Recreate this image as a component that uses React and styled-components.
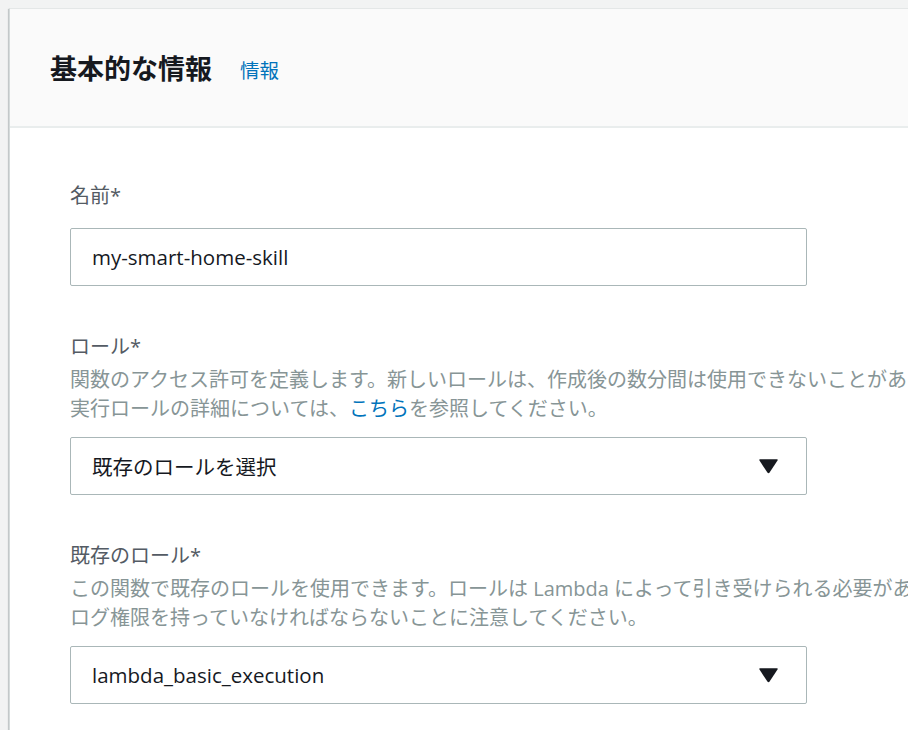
import React from "react";
import styled, { createGlobalStyle } from "styled-components";

const Global = createGlobalStyle`
  html, body {
    margin: 0;
    padding: 0;
    background: #f2f3f3;
    overflow: hidden;
  }
  body {
    font-family: "Open Sans", "Noto Sans CJK JP", sans-serif;
    -webkit-font-smoothing: antialiased;
  }
`;

const Page = styled.div`
  padding: 8px 0 0 9px;
  width: 1200px;
`;

const Card = styled.section`
  background: #ffffff;
  border-top: 1px solid #e4e7e7;
  border-left: 1px solid #d5dbdb;
  box-shadow: 0 1px 1px 0 rgba(0, 28, 36, 0.3), -1px 1px 1px 0 rgba(0, 28, 36, 0.15);
  min-height: 760px;
`;

const Header = styled.header`
  display: flex;
  align-items: center;
  gap: 28px;
  height: 117px;
  padding-left: 40px;
  background: #fafafa;
  border-bottom: 2px solid #e9eded;
`;

const Title = styled.h2`
  margin: 0;
  font-family: "Noto Sans CJK JP", sans-serif;
  font-size: 27px;
  font-weight: 700;
  color: #16191f;
  line-height: 1;
`;

const InfoLink = styled.a`
  font-family: "Noto Sans CJK JP", sans-serif;
  font-size: 19.5px;
  color: #0073bb;
  text-decoration: none;
  line-height: 1;
  margin-top: 4px;
`;

const Body = styled.div`
  padding: 54px 0 0 60px;
  display: flex;
  flex-direction: column;
  gap: 47px;
`;

const Field = styled.div`
  display: flex;
  flex-direction: column;
`;

const Label = styled.label`
  font-family: "Open Sans", "Noto Sans CJK JP", sans-serif;
  font-size: 20px;
  line-height: 28px;
  color: #545b64;
  margin-bottom: ${(p) => (p.$hasDesc ? "4px" : "18px")};
`;

const Desc = styled.p`
  margin: 0 0 14px;
  font-family: "Open Sans", "Noto Sans CJK JP", sans-serif;
  font-size: 20px;
  line-height: 29px;
  color: #879596;
  white-space: nowrap;
`;

const Link = styled.a`
  color: #0073bb;
  text-decoration: none;
`;

const Control = styled.div`
  box-sizing: border-box;
  width: 737px;
  height: 58px;
  border: 1px solid #aab7b8;
  border-radius: 2px;
  background: #ffffff;
  display: flex;
  align-items: center;
  justify-content: space-between;
  padding: 0 27px 0 21px;
  font-family: "Open Sans", "Noto Sans CJK JP", sans-serif;
  font-size: 20.5px;
  color: #16191f;
`;

const Caret = () => (
  <svg width="21" height="16" viewBox="0 0 21 16" aria-hidden="true">
    <path
      d="M2.2 1.2 H18.8 Q20.4 1.2 19.5 2.6 L11.6 14.6 Q10.5 16 9.4 14.6 L1.5 2.6 Q0.6 1.2 2.2 1.2 Z"
      fill="#16191f"
    />
  </svg>
);

export default function App() {
  return (
    <>
      <Global />
      <Page>
        <Card>
          <Header>
            <Title>基本的な情報</Title>
            <InfoLink href="#">情報</InfoLink>
          </Header>
          <Body>
            <Field>
              <Label>名前*</Label>
              <Control>my-smart-home-skill</Control>
            </Field>
            <Field>
              <Label $hasDesc>ロール*</Label>
              <Desc>
                関数のアクセス許可を定義します。新しいロールは、作成後の数分間は使用できないことがあります。
                <br />
                実行ロールの詳細については、<Link href="#">こちら</Link>を参照してください。
              </Desc>
              <Control>
                <span>既存のロールを選択</span>
                <Caret />
              </Control>
            </Field>
            <Field>
              <Label $hasDesc>既存のロール*</Label>
              <Desc>
                この関数で既存のロールを使用できます。ロールは Lambda によって引き受けられる必要があり、Amazon CloudWatch Logs への
                <br />
                ログ権限を持っていなければならないことに注意してください。
              </Desc>
              <Control>
                <span>lambda_basic_execution</span>
                <Caret />
              </Control>
            </Field>
          </Body>
        </Card>
      </Page>
    </>
  );
}
